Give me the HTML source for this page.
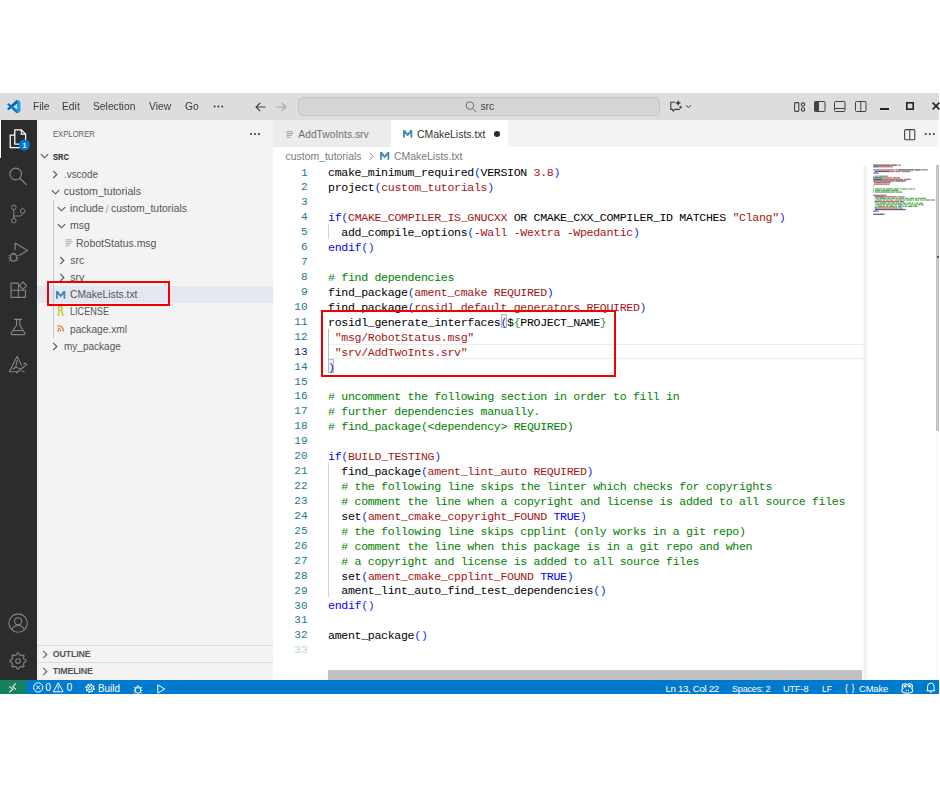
<!DOCTYPE html>
<html><head><meta charset="utf-8"><style>
html,body{margin:0;padding:0;background:#fff;width:940px;height:788px;overflow:hidden;}
.t{position:absolute;white-space:pre;line-height:1;}
.g{will-change:transform;}
.r{position:absolute;}
svg.r{overflow:visible;}
</style></head><body>
<div class="r" style="left:0px;top:93px;width:938.8px;height:26.599999999999994px;background:#dddddd;"></div>
<div class="r" style="left:0px;top:119.6px;width:37px;height:560.0px;background:#2c2c2c;"></div>
<div class="r" style="left:37px;top:119.6px;width:235.5px;height:560.0px;background:#f3f3f3;"></div>
<div class="r" style="left:272.5px;top:119.6px;width:666.3px;height:560.0px;background:#ffffff;"></div>
<div class="r" style="left:0px;top:679.6px;width:938.8px;height:14.199999999999932px;background:#007acc;"></div>
<div class="r" style="left:0px;top:679.6px;width:26px;height:14.199999999999932px;background:#16825d;"></div>
<svg class="r" style="left:6.8px;top:100px;width:13.6px;height:13.2px" viewBox="0 0 100 100"><path d="M96.46 10.8L75.86.87C73.48-.28 70.62.2 68.75 2.07L1.3 63.58c-1.81 1.65-1.81 4.5 0 6.15l5.51 5.01c1.49 1.35 3.72 1.45 5.32.24L93.36 13.37c2.72-2.07 6.64-.13 6.64 3.3v-.24c0-2.41-1.38-4.6-3.54-5.64z" fill="#0065a9"/>
<path d="M96.46 89.2l-20.6 9.92c-2.38 1.15-5.24.66-7.11-1.2L1.3 36.42c-1.81-1.65-1.81-4.5 0-6.15l5.51-5.01c1.49-1.35 3.72-1.45 5.32-.24l81.23 61.62c2.72 2.07 6.64.13 6.64-3.3v.24c0 2.41-1.38 4.6-3.54 5.64z" fill="#007acc"/>
<path d="M75.86 99.13c-2.38 1.15-5.24.66-7.11-1.2 2.3 2.3 6.24.67 6.24-2.58V4.65c0-3.25-3.94-4.88-6.24-2.58 1.87-1.87 4.73-2.35 7.11-1.2l20.6 9.91A6.25 6.25 0 0 1 100 16.4v67.2a6.25 6.25 0 0 1-3.54 5.63z" fill="#1f9cf0"/></svg>
<div class="t g" style="left:33.00px;top:102.38px;font-size:10.3px;color:#3a3a3a;font-weight:normal;font-family:'Liberation Sans', sans-serif;">File</div>
<div class="t g" style="left:62.00px;top:102.38px;font-size:10.3px;color:#3a3a3a;font-weight:normal;font-family:'Liberation Sans', sans-serif;">Edit</div>
<div class="t g" style="left:93.30px;top:102.38px;font-size:10.3px;color:#3a3a3a;font-weight:normal;font-family:'Liberation Sans', sans-serif;">Selection</div>
<div class="t g" style="left:149.00px;top:102.38px;font-size:10.3px;color:#3a3a3a;font-weight:normal;font-family:'Liberation Sans', sans-serif;">View</div>
<div class="t g" style="left:184.50px;top:102.38px;font-size:10.3px;color:#3a3a3a;font-weight:normal;font-family:'Liberation Sans', sans-serif;">Go</div>
<svg class="r" style="left:210px;top:103px;width:16px;height:7px" viewBox="0 0 16 7"><circle cx="4.60" cy="3.5" r="0.95" fill="#333"/><circle cx="8.45" cy="3.5" r="0.95" fill="#333"/><circle cx="12.30" cy="3.5" r="0.95" fill="#333"/></svg>
<svg class="r" style="left:255px;top:102px;width:11px;height:10px" viewBox="0 0 11 10"><path d="M10.5 5 H1.2 M5.2 1 L1 5 L5.2 9" stroke="#444" stroke-width="1.1" fill="none"/></svg>
<svg class="r" style="left:276px;top:102px;width:11px;height:10px" viewBox="0 0 11 10"><path d="M0.5 5 H9.8 M5.8 1 L10 5 L5.8 9" stroke="#a8a8a8" stroke-width="1.1" fill="none"/></svg>
<div class="r" style="left:297.5px;top:96.8px;width:362px;height:18.8px;background:#d5d5d5;box-sizing:border-box;border:1px solid #c5c5c5;border-radius:5px;"></div>
<svg class="r" style="left:465px;top:100.5px;width:12px;height:12px" viewBox="0 0 12 12"><circle cx="4.9" cy="4.6" r="3.8" stroke="#666" stroke-width="0.95" fill="none"/><path d="M7.6 7.4 L11.2 11" stroke="#666" stroke-width="1"/></svg>
<div class="t " style="left:480.40px;top:102.18px;font-size:10.3px;color:#444444;font-weight:normal;font-family:'Liberation Sans', sans-serif;">src</div>
<svg class="r" style="left:669px;top:100px;width:24px;height:12px" viewBox="0 0 24 12"><path d="M6.2 2.3 H1.8 V9.4 H3.4 L4.3 11 L5.9 9.4 H10.8" stroke="#3b3b3b" stroke-width="1.1" fill="none"/>
<path d="M9.2 0.1 L10.1 2.1 L12.1 3.0 L10.1 3.9 L9.2 5.9 L8.3 3.9 L6.3 3.0 L8.3 2.1 Z" fill="#3b3b3b"/>
<path d="M11.6 5.4 L12.2 6.6 L13.4 7.2 L12.2 7.8 L11.6 9.0 L11.0 7.8 L9.8 7.2 L11.0 6.6 Z" fill="#3b3b3b"/>
<path d="M17.2 5.4 L19.5 7.5 L21.8 5.4" stroke="#3b3b3b" stroke-width="1" fill="none"/></svg>
<svg class="r" style="left:794px;top:102px;width:12px;height:10px" viewBox="0 0 12 10"><rect x="0.6" y="0.6" width="4.2" height="8.8" rx="0.8" stroke="#444" stroke-width="1.1" fill="none"/><circle cx="9" cy="2.6" r="1.7" stroke="#444" stroke-width="1.1" fill="none"/><circle cx="9" cy="7.4" r="1.7" stroke="#444" stroke-width="1.1" fill="none"/></svg>
<svg class="r" style="left:814px;top:101px;width:12px;height:11px" viewBox="0 0 12 11"><rect x="0.5" y="0.5" width="10.5" height="10" rx="1" stroke="#444" stroke-width="1" fill="none"/><rect x="0.5" y="0.5" width="4.5" height="10" fill="#444"/></svg>
<svg class="r" style="left:834px;top:101px;width:12px;height:11px" viewBox="0 0 12 11"><rect x="0.5" y="0.5" width="10.5" height="10" rx="1" stroke="#444" stroke-width="1" fill="none"/><path d="M0.5 7.5 H11" stroke="#444" stroke-width="1"/></svg>
<svg class="r" style="left:855px;top:101px;width:12px;height:11px" viewBox="0 0 12 11"><rect x="0.5" y="0.5" width="10.5" height="10" rx="1" stroke="#444" stroke-width="1" fill="none"/><path d="M5.75 0.5 V10.5" stroke="#444" stroke-width="1"/></svg>
<div class="r" style="left:880.4px;top:108px;width:8.6px;height:1.7px;background:#222;"></div>
<svg class="r" style="left:906px;top:102.4px;width:8px;height:8px" viewBox="0 0 8 8"><rect x="0.8" y="0.8" width="6.4" height="6.4" stroke="#222" stroke-width="1.6" fill="none"/></svg>
<svg class="r" style="left:931.5px;top:102.3px;width:8px;height:8px" viewBox="0 0 8 8"><path d="M0.6 0.6 L7.4 7.4 M7.4 0.6 L0.6 7.4" stroke="#222" stroke-width="1.5"/></svg>
<div class="r" style="left:0px;top:119.6px;width:1.2px;height:38px;background:#ffffff;"></div>
<svg class="r" style="left:8px;top:128px;width:22px;height:22px" viewBox="0 0 22 22"><path d="M6.8 1.8 H13.3 L17.6 6.1 V16 H6.8 Z" stroke="#fff" stroke-width="1.25" fill="none" stroke-linejoin="round"/>
<path d="M13.3 1.8 V6.1 H17.6" stroke="#fff" stroke-width="1.1" fill="none"/>
<path d="M6.8 7 H2.2 V19.6 H11.8 V16" stroke="#fff" stroke-width="1.25" fill="none" stroke-linejoin="round"/>
<circle cx="16.4" cy="17" r="5.5" fill="#0078d4"/><text x="16.4" y="19.6" font-size="7" font-family="Liberation Sans" font-weight="bold" fill="#fff" text-anchor="middle">1</text></svg>
<svg class="r" style="left:8px;top:166px;width:22px;height:22px" viewBox="0 0 22 22"><circle cx="7.7" cy="8" r="5.8" stroke="#858585" stroke-width="1.2" fill="none"/><path d="M11.9 12.2 L18.6 18.9" stroke="#858585" stroke-width="1.3"/></svg>
<svg class="r" style="left:9px;top:203px;width:20px;height:21px" viewBox="0 0 20 21"><circle cx="4.8" cy="4.4" r="2.3" stroke="#858585" stroke-width="1" fill="none"/>
<circle cx="13.6" cy="8" r="2.3" stroke="#858585" stroke-width="1" fill="none"/>
<circle cx="4.8" cy="17.7" r="2.3" stroke="#858585" stroke-width="1" fill="none"/>
<path d="M4.8 6.7 V15.4 M13.6 10.3 Q13.6 13 11 13 H6.5 Q4.8 13 4.8 14.5" stroke="#858585" stroke-width="1" fill="none"/></svg>
<svg class="r" style="left:7px;top:242px;width:22px;height:21px" viewBox="0 0 22 21"><path d="M8.1 1 V8.3 M8.1 1 L20.5 8.5 L12.2 13.6" stroke="#858585" stroke-width="1.15" fill="none"/>
<ellipse cx="6.5" cy="15.6" rx="3.1" ry="3.7" stroke="#858585" stroke-width="1.1" fill="none"/>
<path d="M4.6 12.4 Q6.5 9.6 8.4 12.4" stroke="#858585" stroke-width="1.1" fill="none"/>
<path d="M3.4 13.6 H1.6 M3.3 16 H1.3 M3.5 18.3 H1.8 M9.6 13.6 H11.4 M9.7 16 H11.7 M9.5 18.3 H11.2" stroke="#858585" stroke-width="1" fill="none"/></svg>
<svg class="r" style="left:9px;top:281px;width:20px;height:19px" viewBox="0 0 20 19"><path d="M2.05 2.15 H9.4 V16.35 H2.05 Z M2.05 9.2 H16.45 V16.35 H9.4" stroke="#858585" stroke-width="1.1" fill="none" stroke-linejoin="round"/>
<path d="M14 1.0 L17.6 4.65 L14 8.3 L10.4 4.65 Z" stroke="#858585" stroke-width="1.1" fill="none" stroke-linejoin="round"/></svg>
<svg class="r" style="left:9px;top:318px;width:20px;height:19px" viewBox="0 0 20 19"><path d="M5.2 1.4 H13 M7.6 1.4 V7.2 L2.3 15 Q1.7 16.6 3.5 16.6 H14.5 Q16.3 16.6 15.7 15 L10.8 7.2 V1.4" stroke="#858585" stroke-width="1.15" fill="none" stroke-linejoin="round"/>
<path d="M4.3 12.6 H13.7" stroke="#858585" stroke-width="1.1"/></svg>
<svg class="r" style="left:8px;top:355px;width:20px;height:20px" viewBox="0 0 20 20"><path d="M9.2 1.3 L1.3 16.8 H9 M9.2 1.3 L13.6 10.5 M9.2 5 L7.8 12.2 Q6 13.5 4.4 14.2 M7.8 12.2 Q11 13 12.5 14" stroke="#858585" stroke-width="1.1" fill="none" stroke-linejoin="round"/>
<path d="M8.3 18.2 L17.2 10.4 M15.4 8.6 Q18.6 7.6 18.8 10.6 M14 16 L16.5 16.8" stroke="#858585" stroke-width="1.3" fill="none"/></svg>
<svg class="r" style="left:8px;top:612.5px;width:21px;height:21px" viewBox="0 0 21 21"><circle cx="10.1" cy="10.1" r="9.2" stroke="#858585" stroke-width="1.1" fill="none"/>
<circle cx="10.1" cy="8.3" r="3.6" stroke="#858585" stroke-width="1.1" fill="none"/>
<path d="M3.9 16.6 Q5.5 12.5 10.1 12.5 Q14.7 12.5 16.3 16.6" stroke="#858585" stroke-width="1.1" fill="none"/></svg>
<svg class="r" style="left:8px;top:650.8px;width:20px;height:20px" viewBox="0 0 20 20"><path d="M16.15 8.63 L17.94 9.04 L17.94 10.96 L16.15 11.37 L15.32 13.38 L16.29 14.94 L14.94 16.29 L13.38 15.32 L11.37 16.15 L10.96 17.94 L9.04 17.94 L8.63 16.15 L6.62 15.32 L5.06 16.29 L3.71 14.94 L4.68 13.38 L3.85 11.37 L2.06 10.96 L2.06 9.04 L3.85 8.63 L4.68 6.62 L3.71 5.06 L5.06 3.71 L6.62 4.68 L8.63 3.85 L9.04 2.06 L10.96 2.06 L11.37 3.85 L13.38 4.68 L14.94 3.71 L16.29 5.06 L15.32 6.62 Z" stroke="#858585" stroke-width="1.1" fill="none" stroke-linejoin="round"/><circle cx="10" cy="10" r="2.3" stroke="#858585" stroke-width="1.1" fill="none"/></svg>
<div class="t " style="left:52.60px;top:128.97px;font-size:9.6px;color:#616161;font-weight:normal;font-family:'Liberation Sans', sans-serif;transform:scaleX(0.8);transform-origin:0 0;">EXPLORER</div>
<svg class="r" style="left:246px;top:130px;width:16px;height:8px" viewBox="0 0 16 8"><circle cx="5.00" cy="4.1" r="1.05" fill="#424242"/><circle cx="9.00" cy="4.1" r="1.05" fill="#424242"/><circle cx="13.00" cy="4.1" r="1.05" fill="#424242"/></svg>
<svg class="r" style="left:40.3px;top:153.1px;width:9px;height:6px" viewBox="0 0 9 6"><path d="M0.8 1.2 L4.5 4.8 L8.2 1.2" stroke="#555555" stroke-width="1.15" fill="none"/></svg>
<div class="t " style="left:52.60px;top:151.77px;font-size:9.6px;color:#333333;font-weight:bold;font-family:'Liberation Sans', sans-serif;transform:scaleX(0.78);transform-origin:0 0;-webkit-text-stroke:0.15px #333;">SRC</div>
<div class="r" style="left:37px;top:286.2px;width:235.5px;height:17.2px;background:#e4e6f1;"></div>
<svg class="r" style="left:52px;top:169.79999999999998px;width:6px;height:9px" viewBox="0 0 6 9"><path d="M1.2 0.8 L4.8 4.5 L1.2 8.2" stroke="#555555" stroke-width="1.15" fill="none"/></svg>
<div class="t " style="left:63.80px;top:168.83px;font-size:10.6px;color:#555555;font-weight:normal;font-family:'Liberation Sans', sans-serif;transform:scaleX(0.93);transform-origin:0 0;">.vscode</div>
<svg class="r" style="left:50.7px;top:188.7px;width:9px;height:6px" viewBox="0 0 9 6"><path d="M0.8 1.2 L4.5 4.8 L8.2 1.2" stroke="#555555" stroke-width="1.15" fill="none"/></svg>
<div class="t " style="left:63.80px;top:186.03px;font-size:10.6px;color:#555555;font-weight:normal;font-family:'Liberation Sans', sans-serif;">custom_tutorials</div>
<svg class="r" style="left:56.9px;top:205.89999999999998px;width:9px;height:6px" viewBox="0 0 9 6"><path d="M0.8 1.2 L4.5 4.8 L8.2 1.2" stroke="#555555" stroke-width="1.15" fill="none"/></svg>
<div class="t " style="left:70.00px;top:203.23px;font-size:10.6px;color:#555555;font-weight:normal;font-family:'Liberation Sans', sans-serif;">include</div>
<div class="t " style="left:105.40px;top:204.07px;font-size:11.5px;color:#a8a8a8;font-weight:normal;font-family:'Liberation Sans', sans-serif;">/</div>
<div class="t " style="left:111.00px;top:203.23px;font-size:10.6px;color:#555555;font-weight:normal;font-family:'Liberation Sans', sans-serif;transform:scaleX(0.985);transform-origin:0 0;">custom_tutorials</div>
<svg class="r" style="left:56.9px;top:223.09999999999997px;width:9px;height:6px" viewBox="0 0 9 6"><path d="M0.8 1.2 L4.5 4.8 L8.2 1.2" stroke="#555555" stroke-width="1.15" fill="none"/></svg>
<div class="t " style="left:70.00px;top:220.43px;font-size:10.6px;color:#555555;font-weight:normal;font-family:'Liberation Sans', sans-serif;">msg</div>
<svg class="r" style="left:64.5px;top:238.6px;width:8px;height:8px" viewBox="0 0 8 8"><path d="M0.5 0.8 H6.5 M0.5 2.8 H7.5 M0.5 4.8 H6 M0.5 6.8 H4.5" stroke="#a0a0a0" stroke-width="0.9"/></svg>
<div class="t " style="left:76.40px;top:237.63px;font-size:10.6px;color:#555555;font-weight:normal;font-family:'Liberation Sans', sans-serif;transform:scaleX(0.99);transform-origin:0 0;">RobotStatus.msg</div>
<svg class="r" style="left:58.6px;top:255.79999999999995px;width:6px;height:9px" viewBox="0 0 6 9"><path d="M1.2 0.8 L4.8 4.5 L1.2 8.2" stroke="#555555" stroke-width="1.15" fill="none"/></svg>
<div class="t " style="left:70.30px;top:254.83px;font-size:10.6px;color:#555555;font-weight:normal;font-family:'Liberation Sans', sans-serif;">src</div>
<svg class="r" style="left:58.6px;top:273.0px;width:6px;height:9px" viewBox="0 0 6 9"><path d="M1.2 0.8 L4.8 4.5 L1.2 8.2" stroke="#555555" stroke-width="1.15" fill="none"/></svg>
<div class="t " style="left:70.30px;top:272.03px;font-size:10.6px;color:#555555;font-weight:normal;font-family:'Liberation Sans', sans-serif;">srv</div>
<svg class="r" style="left:56px;top:290.59999999999997px;width:10px;height:8px" viewBox="0 0 10 8"><path d="M0 7.8 V0 H1.9 L4.65 3.4 L7.4 0 H9.3 V7.8 H7.5 V3.2 L4.65 6.2 L1.8 3.2 V7.8 Z" fill="#3c8cb4"/></svg>
<div class="t " style="left:70.30px;top:289.23px;font-size:10.6px;color:#555555;font-weight:normal;font-family:'Liberation Sans', sans-serif;transform:scaleX(0.97);transform-origin:0 0;">CMakeLists.txt</div>
<svg class="r" style="left:56.5px;top:306.2px;width:8px;height:11px" viewBox="0 0 8 11"><circle cx="3.2" cy="2.5" r="2" stroke="#cbcb41" stroke-width="1.3" fill="#e8e8a0"/><path d="M2 4.2 L1.2 10 M4.4 4.2 L6.2 10" stroke="#cbcb41" stroke-width="1.5"/></svg>
<div class="t " style="left:70.30px;top:306.43px;font-size:10.6px;color:#555555;font-weight:normal;font-family:'Liberation Sans', sans-serif;transform:scaleX(0.86);transform-origin:0 0;">LICENSE</div>
<svg class="r" style="left:56.8px;top:325.3px;width:7px;height:7px" viewBox="0 0 7 7"><circle cx="1.2" cy="5.7" r="1" fill="#e37933"/><path d="M0.4 3 Q3.5 3 3.7 6.4 M0.4 0.6 Q6.2 0.6 6.4 6.4" stroke="#e37933" stroke-width="1.2" fill="none"/></svg>
<div class="t " style="left:70.30px;top:323.63px;font-size:10.6px;color:#555555;font-weight:normal;font-family:'Liberation Sans', sans-serif;transform:scaleX(0.957);transform-origin:0 0;">package.xml</div>
<svg class="r" style="left:52.2px;top:341.79999999999995px;width:6px;height:9px" viewBox="0 0 6 9"><path d="M1.2 0.8 L4.8 4.5 L1.2 8.2" stroke="#555555" stroke-width="1.15" fill="none"/></svg>
<div class="t " style="left:63.80px;top:340.83px;font-size:10.6px;color:#555555;font-weight:normal;font-family:'Liberation Sans', sans-serif;transform:scaleX(0.945);transform-origin:0 0;">my_package</div>
<div class="r" style="left:52.6px;top:199.5px;width:1px;height:138px;background:#c8c8c8;"></div>
<div class="r" style="left:46.9px;top:280.8px;width:123.1px;height:25px;box-sizing:border-box;border:2.2px solid #f00000;"></div>
<div class="r" style="left:37px;top:645px;width:235.5px;height:0.9px;background:#dcdcdc;"></div>
<div class="r" style="left:37px;top:662px;width:235.5px;height:0.9px;background:#dcdcdc;"></div>
<svg class="r" style="left:42.2px;top:649.7px;width:6px;height:9px" viewBox="0 0 6 9"><path d="M1.2 0.8 L4.8 4.5 L1.2 8.2" stroke="#6a6a6a" stroke-width="1.15" fill="none"/></svg>
<div class="t " style="left:52.80px;top:650.27px;font-size:8.9px;color:#555555;font-weight:bold;font-family:'Liberation Sans', sans-serif;letter-spacing:-0.2px;">OUTLINE</div>
<svg class="r" style="left:42.2px;top:666.7px;width:6px;height:9px" viewBox="0 0 6 9"><path d="M1.2 0.8 L4.8 4.5 L1.2 8.2" stroke="#6a6a6a" stroke-width="1.15" fill="none"/></svg>
<div class="t " style="left:52.80px;top:667.27px;font-size:8.9px;color:#555555;font-weight:bold;font-family:'Liberation Sans', sans-serif;letter-spacing:-0.2px;">TIMELINE</div>
<div class="r" style="left:272.5px;top:119.6px;width:666.3px;height:27.1px;background:#f3f3f3;"></div>
<div class="r" style="left:272.5px;top:119.6px;width:118.2px;height:27.1px;background:#ececec;"></div>
<div class="r" style="left:390.7px;top:119.6px;width:117.3px;height:27.5px;background:#ffffff;"></div>
<svg class="r" style="left:286px;top:130.5px;width:8px;height:7px" viewBox="0 0 8 7"><path d="M0.5 0.6 H7 M0.5 2.5 H7.5 M0.5 4.4 H6 M0.5 6.3 H4.5" stroke="#9a9a9a" stroke-width="0.9"/></svg>
<div class="t " style="left:298.30px;top:129.68px;font-size:10.3px;color:#707070;font-weight:normal;font-family:'Liberation Sans', sans-serif;">AddTwoInts.srv</div>
<svg class="r" style="left:403px;top:130.3px;width:10px;height:8px" viewBox="0 0 10 8"><path d="M0 7.8 V0 H1.9 L4.65 3.4 L7.4 0 H9.3 V7.8 H7.5 V3.2 L4.65 6.2 L1.8 3.2 V7.8 Z" fill="#3c8cb4"/></svg>
<div class="t " style="left:417.00px;top:129.55px;font-size:10.45px;color:#333333;font-weight:normal;font-family:'Liberation Sans', sans-serif;">CMakeLists.txt</div>
<div class="r" style="left:493.6px;top:130.9px;width:6.4px;height:6.4px;border-radius:50%;background:#2b2b2b;"></div>
<svg class="r" style="left:904px;top:128.8px;width:11.5px;height:11.5px" viewBox="0 0 11.5 11.5"><rect x="0.6" y="0.6" width="10.2" height="10.2" rx="1.3" stroke="#424242" stroke-width="1.1" fill="none"/><path d="M5.7 0.6 V10.8" stroke="#424242" stroke-width="1.1"/></svg>
<svg class="r" style="left:922px;top:130px;width:16px;height:8px" viewBox="0 0 16 8"><circle cx="3.80" cy="4.1" r="1.05" fill="#424242"/><circle cx="7.80" cy="4.1" r="1.05" fill="#424242"/><circle cx="11.80" cy="4.1" r="1.05" fill="#424242"/></svg>
<div class="t " style="left:285.50px;top:151.95px;font-size:10.45px;color:#7a7a7a;font-weight:normal;font-family:'Liberation Sans', sans-serif;">custom_tutorials</div>
<svg class="r" style="left:368.8px;top:152.2px;width:5px;height:9px" viewBox="0 0 5 9"><path d="M0.8 0.8 L4.2 4.3 L0.8 7.8" stroke="#8a8a8a" stroke-width="1" fill="none"/></svg>
<svg class="r" style="left:379.6px;top:152.1px;width:10px;height:8px" viewBox="0 0 10 8"><path d="M0 7.8 V0 H1.9 L4.65 3.4 L7.4 0 H9.3 V7.8 H7.5 V3.2 L4.65 6.2 L1.8 3.2 V7.8 Z" fill="#3c8cb4"/></svg>
<div class="t " style="left:394.00px;top:151.95px;font-size:10.45px;color:#7a7a7a;font-weight:normal;font-family:'Liberation Sans', sans-serif;">CMakeLists.txt</div>
<div class="r" style="left:328px;top:344px;width:537.2px;height:14.6px;box-sizing:border-box;border-top:1px solid #ececec;border-bottom:1px solid #ececec;"></div>
<div class="r" style="left:328.0px;top:223.82px;width:1.0px;height:14.93px;background:#d3d3d3;"></div>
<div class="r" style="left:328.0px;top:328.83000000000004px;width:1.1px;height:29.86px;background:#bdbdbd;"></div>
<div class="r" style="left:328.0px;top:462.70000000000005px;width:1.0px;height:134.37px;background:#d3d3d3;"></div>
<div class="r" style="left:500.78px;top:314.00px;width:6.03px;height:13.73px;box-sizing:border-box;border:1px solid #b9b9b9;background:#f0f0f0;"></div>
<div class="r" style="left:328.40px;top:358.79px;width:6.03px;height:13.73px;box-sizing:border-box;border:1px solid #b9b9b9;background:#f0f0f0;"></div>
<div class="t " style="left:300.97px;top:167.53px;font-size:11.05px;color:#237893;font-weight:normal;font-family:'Liberation Mono', monospace;">1</div>
<div class="t" style="left:328.1px;top:167.41px;font-size:11.6px;letter-spacing:-0.330px;font-family:'Liberation Mono', monospace;"><span style="color:#000000">cmake_minimum_required</span><span style="color:#0431fa">(</span><span style="color:#000000">VERSION </span><span style="color:#a31515">3.8</span><span style="color:#0431fa">)</span></div>
<div class="t " style="left:300.97px;top:182.46px;font-size:11.05px;color:#237893;font-weight:normal;font-family:'Liberation Mono', monospace;">2</div>
<div class="t" style="left:328.1px;top:182.34px;font-size:11.6px;letter-spacing:-0.330px;font-family:'Liberation Mono', monospace;"><span style="color:#000000">project</span><span style="color:#0431fa">(</span><span style="color:#a31515">custom_tutorials</span><span style="color:#0431fa">)</span></div>
<div class="t " style="left:300.97px;top:197.39px;font-size:11.05px;color:#237893;font-weight:normal;font-family:'Liberation Mono', monospace;">3</div>
<div class="t " style="left:300.97px;top:212.32px;font-size:11.05px;color:#237893;font-weight:normal;font-family:'Liberation Mono', monospace;">4</div>
<div class="t" style="left:328.1px;top:212.20px;font-size:11.6px;letter-spacing:-0.330px;font-family:'Liberation Mono', monospace;"><span style="color:#0000ff">if</span><span style="color:#0431fa">(</span><span style="color:#a31515">CMAKE_COMPILER_IS_GNUCXX</span><span style="color:#000000"> OR CMAKE_CXX_COMPILER_ID MATCHES </span><span style="color:#a31515">&quot;Clang&quot;</span><span style="color:#0431fa">)</span></div>
<div class="t " style="left:300.97px;top:227.25px;font-size:11.05px;color:#237893;font-weight:normal;font-family:'Liberation Mono', monospace;">5</div>
<div class="t" style="left:328.1px;top:227.13px;font-size:11.6px;letter-spacing:-0.330px;font-family:'Liberation Mono', monospace;"><span style="color:#000000">  add_compile_options</span><span style="color:#0431fa">(</span><span style="color:#a31515">-Wall -Wextra -Wpedantic</span><span style="color:#0431fa">)</span></div>
<div class="t " style="left:300.97px;top:242.18px;font-size:11.05px;color:#237893;font-weight:normal;font-family:'Liberation Mono', monospace;">6</div>
<div class="t" style="left:328.1px;top:242.06px;font-size:11.6px;letter-spacing:-0.330px;font-family:'Liberation Mono', monospace;"><span style="color:#0000ff">endif</span><span style="color:#0431fa">()</span></div>
<div class="t " style="left:300.97px;top:257.11px;font-size:11.05px;color:#237893;font-weight:normal;font-family:'Liberation Mono', monospace;">7</div>
<div class="t " style="left:300.97px;top:272.04px;font-size:11.05px;color:#237893;font-weight:normal;font-family:'Liberation Mono', monospace;">8</div>
<div class="t" style="left:328.1px;top:271.92px;font-size:11.6px;letter-spacing:-0.330px;font-family:'Liberation Mono', monospace;"><span style="color:#008000"># find dependencies</span></div>
<div class="t " style="left:300.97px;top:286.97px;font-size:11.05px;color:#237893;font-weight:normal;font-family:'Liberation Mono', monospace;">9</div>
<div class="t" style="left:328.1px;top:286.85px;font-size:11.6px;letter-spacing:-0.330px;font-family:'Liberation Mono', monospace;"><span style="color:#000000">find_package</span><span style="color:#0431fa">(</span><span style="color:#a31515">ament_cmake REQUIRED</span><span style="color:#0431fa">)</span></div>
<div class="t " style="left:294.34px;top:301.90px;font-size:11.05px;color:#237893;font-weight:normal;font-family:'Liberation Mono', monospace;">10</div>
<div class="t" style="left:328.1px;top:301.78px;font-size:11.6px;letter-spacing:-0.330px;font-family:'Liberation Mono', monospace;"><span style="color:#000000">find_package</span><span style="color:#0431fa">(</span><span style="color:#a31515">rosidl_default_generators REQUIRED</span><span style="color:#0431fa">)</span></div>
<div class="t " style="left:294.34px;top:316.83px;font-size:11.05px;color:#237893;font-weight:normal;font-family:'Liberation Mono', monospace;">11</div>
<div class="t" style="left:328.1px;top:316.71px;font-size:11.6px;letter-spacing:-0.330px;font-family:'Liberation Mono', monospace;"><span style="color:#000000">rosidl_generate_interfaces</span><span style="color:#0431fa">(</span><span style="color:#000000">$</span><span style="color:#319331">{</span><span style="color:#000000">PROJECT_NAME</span><span style="color:#319331">}</span></div>
<div class="t " style="left:294.34px;top:331.76px;font-size:11.05px;color:#237893;font-weight:normal;font-family:'Liberation Mono', monospace;">12</div>
<div class="t" style="left:328.1px;top:331.64px;font-size:11.6px;letter-spacing:-0.330px;font-family:'Liberation Mono', monospace;"><span style="color:#a31515"> &quot;msg/RobotStatus.msg&quot;</span></div>
<div class="t " style="left:294.34px;top:346.69px;font-size:11.05px;color:#0b216f;font-weight:normal;font-family:'Liberation Mono', monospace;">13</div>
<div class="t" style="left:328.1px;top:346.57px;font-size:11.6px;letter-spacing:-0.330px;font-family:'Liberation Mono', monospace;"><span style="color:#a31515"> &quot;srv/AddTwoInts.srv&quot;</span></div>
<div class="t " style="left:294.34px;top:361.62px;font-size:11.05px;color:#237893;font-weight:normal;font-family:'Liberation Mono', monospace;">14</div>
<div class="t" style="left:328.1px;top:361.50px;font-size:11.6px;letter-spacing:-0.330px;font-family:'Liberation Mono', monospace;"><span style="color:#0431fa">)</span></div>
<div class="t " style="left:294.34px;top:376.55px;font-size:11.05px;color:#237893;font-weight:normal;font-family:'Liberation Mono', monospace;">15</div>
<div class="t " style="left:294.34px;top:391.48px;font-size:11.05px;color:#237893;font-weight:normal;font-family:'Liberation Mono', monospace;">16</div>
<div class="t" style="left:328.1px;top:391.36px;font-size:11.6px;letter-spacing:-0.330px;font-family:'Liberation Mono', monospace;"><span style="color:#008000"># uncomment the following section in order to fill in</span></div>
<div class="t " style="left:294.34px;top:406.41px;font-size:11.05px;color:#237893;font-weight:normal;font-family:'Liberation Mono', monospace;">17</div>
<div class="t" style="left:328.1px;top:406.29px;font-size:11.6px;letter-spacing:-0.330px;font-family:'Liberation Mono', monospace;"><span style="color:#008000"># further dependencies manually.</span></div>
<div class="t " style="left:294.34px;top:421.34px;font-size:11.05px;color:#237893;font-weight:normal;font-family:'Liberation Mono', monospace;">18</div>
<div class="t" style="left:328.1px;top:421.22px;font-size:11.6px;letter-spacing:-0.330px;font-family:'Liberation Mono', monospace;"><span style="color:#008000"># find_package(&lt;dependency&gt; REQUIRED)</span></div>
<div class="t " style="left:294.34px;top:436.27px;font-size:11.05px;color:#237893;font-weight:normal;font-family:'Liberation Mono', monospace;">19</div>
<div class="t " style="left:294.34px;top:451.20px;font-size:11.05px;color:#237893;font-weight:normal;font-family:'Liberation Mono', monospace;">20</div>
<div class="t" style="left:328.1px;top:451.08px;font-size:11.6px;letter-spacing:-0.330px;font-family:'Liberation Mono', monospace;"><span style="color:#0000ff">if</span><span style="color:#0431fa">(</span><span style="color:#a31515">BUILD_TESTING</span><span style="color:#0431fa">)</span></div>
<div class="t " style="left:294.34px;top:466.13px;font-size:11.05px;color:#237893;font-weight:normal;font-family:'Liberation Mono', monospace;">21</div>
<div class="t" style="left:328.1px;top:466.01px;font-size:11.6px;letter-spacing:-0.330px;font-family:'Liberation Mono', monospace;"><span style="color:#000000">  find_package</span><span style="color:#0431fa">(</span><span style="color:#a31515">ament_lint_auto REQUIRED</span><span style="color:#0431fa">)</span></div>
<div class="t " style="left:294.34px;top:481.06px;font-size:11.05px;color:#237893;font-weight:normal;font-family:'Liberation Mono', monospace;">22</div>
<div class="t" style="left:328.1px;top:480.94px;font-size:11.6px;letter-spacing:-0.330px;font-family:'Liberation Mono', monospace;"><span style="color:#008000">  # the following line skips the linter which checks for copyrights</span></div>
<div class="t " style="left:294.34px;top:495.99px;font-size:11.05px;color:#237893;font-weight:normal;font-family:'Liberation Mono', monospace;">23</div>
<div class="t" style="left:328.1px;top:495.87px;font-size:11.6px;letter-spacing:-0.330px;font-family:'Liberation Mono', monospace;"><span style="color:#008000">  # comment the line when a copyright and license is added to all source files</span></div>
<div class="t " style="left:294.34px;top:510.92px;font-size:11.05px;color:#237893;font-weight:normal;font-family:'Liberation Mono', monospace;">24</div>
<div class="t" style="left:328.1px;top:510.80px;font-size:11.6px;letter-spacing:-0.330px;font-family:'Liberation Mono', monospace;"><span style="color:#000000">  set</span><span style="color:#0431fa">(</span><span style="color:#a31515">ament_cmake_copyright_FOUND </span><span style="color:#0000ff">TRUE</span><span style="color:#0431fa">)</span></div>
<div class="t " style="left:294.34px;top:525.85px;font-size:11.05px;color:#237893;font-weight:normal;font-family:'Liberation Mono', monospace;">25</div>
<div class="t" style="left:328.1px;top:525.73px;font-size:11.6px;letter-spacing:-0.330px;font-family:'Liberation Mono', monospace;"><span style="color:#008000">  # the following line skips cpplint (only works in a git repo)</span></div>
<div class="t " style="left:294.34px;top:540.78px;font-size:11.05px;color:#237893;font-weight:normal;font-family:'Liberation Mono', monospace;">26</div>
<div class="t" style="left:328.1px;top:540.66px;font-size:11.6px;letter-spacing:-0.330px;font-family:'Liberation Mono', monospace;"><span style="color:#008000">  # comment the line when this package is in a git repo and when</span></div>
<div class="t " style="left:294.34px;top:555.71px;font-size:11.05px;color:#237893;font-weight:normal;font-family:'Liberation Mono', monospace;">27</div>
<div class="t" style="left:328.1px;top:555.59px;font-size:11.6px;letter-spacing:-0.330px;font-family:'Liberation Mono', monospace;"><span style="color:#008000">  # a copyright and license is added to all source files</span></div>
<div class="t " style="left:294.34px;top:570.64px;font-size:11.05px;color:#237893;font-weight:normal;font-family:'Liberation Mono', monospace;">28</div>
<div class="t" style="left:328.1px;top:570.52px;font-size:11.6px;letter-spacing:-0.330px;font-family:'Liberation Mono', monospace;"><span style="color:#000000">  set</span><span style="color:#0431fa">(</span><span style="color:#a31515">ament_cmake_cpplint_FOUND </span><span style="color:#0000ff">TRUE</span><span style="color:#0431fa">)</span></div>
<div class="t " style="left:294.34px;top:585.57px;font-size:11.05px;color:#237893;font-weight:normal;font-family:'Liberation Mono', monospace;">29</div>
<div class="t" style="left:328.1px;top:585.45px;font-size:11.6px;letter-spacing:-0.330px;font-family:'Liberation Mono', monospace;"><span style="color:#000000">  ament_lint_auto_find_test_dependencies</span><span style="color:#0431fa">()</span></div>
<div class="t " style="left:294.34px;top:600.50px;font-size:11.05px;color:#237893;font-weight:normal;font-family:'Liberation Mono', monospace;">30</div>
<div class="t" style="left:328.1px;top:600.38px;font-size:11.6px;letter-spacing:-0.330px;font-family:'Liberation Mono', monospace;"><span style="color:#0000ff">endif</span><span style="color:#0431fa">()</span></div>
<div class="t " style="left:294.34px;top:615.43px;font-size:11.05px;color:#237893;font-weight:normal;font-family:'Liberation Mono', monospace;">31</div>
<div class="t " style="left:294.34px;top:630.36px;font-size:11.05px;color:#237893;font-weight:normal;font-family:'Liberation Mono', monospace;">32</div>
<div class="t" style="left:328.1px;top:630.24px;font-size:11.6px;letter-spacing:-0.330px;font-family:'Liberation Mono', monospace;"><span style="color:#000000">ament_package</span><span style="color:#0431fa">()</span></div>
<div class="t " style="left:294.34px;top:645.29px;font-size:11.05px;color:#b5d5df;font-weight:normal;font-family:'Liberation Mono', monospace;">33</div>
<div class="r" style="left:320.9px;top:310px;width:295px;height:67px;box-sizing:border-box;border:2.2px solid #f00000;"></div>
<div class="r" style="left:862.2px;top:164.5px;width:5.5px;height:515.1px;background:linear-gradient(to right, rgba(255,255,255,0), #eeeeee 55%, rgba(255,255,255,0));"></div>
<div class="r" style="left:936.4px;top:164.8px;width:2.5px;height:266px;background:#c4c4c4;"></div>
<div class="r" style="left:937px;top:256.4px;width:2.0px;height:2.0px;background:#555555;"></div>
<div class="r" style="left:936.4px;top:430.8px;width:0.8px;height:249px;background:#f4f4f4;"></div>
<div class="r" style="left:328px;top:670.1px;width:533.8px;height:9.5px;background:#c1c1c1;"></div>
<svg class="r" style="left:8px;top:682px;width:10px;height:12px" viewBox="0 0 10 12"><path d="M1.3 4.5 L4.8 7.2 L1.3 10.3 M8 1.3 L4.8 4.7 L8 7.6" stroke="#f0f0f0" stroke-width="1.05" fill="none"/></svg>
<svg class="r" style="left:32.6px;top:682.4px;width:11px;height:11px" viewBox="0 0 11 11"><circle cx="5.2" cy="5.4" r="4.6" stroke="#fff" stroke-width="1" fill="none"/><path d="M3.3 3.5 L7.1 7.3 M7.1 3.5 L3.3 7.3" stroke="#fff" stroke-width="1"/></svg>
<div class="t " style="left:45.30px;top:683.38px;font-size:10.3px;color:#ffffff;font-weight:normal;font-family:'Liberation Sans', sans-serif;">0</div>
<svg class="r" style="left:53px;top:682.4px;width:11px;height:11px" viewBox="0 0 11 11"><path d="M5.2 0.8 L10.2 9.8 H0.3 Z" stroke="#fff" stroke-width="1" fill="none" stroke-linejoin="round"/><path d="M5.2 3.8 V6.8 M5.2 7.8 V8.8" stroke="#fff" stroke-width="1"/></svg>
<div class="t " style="left:66.50px;top:683.38px;font-size:10.3px;color:#ffffff;font-weight:normal;font-family:'Liberation Sans', sans-serif;">0</div>
<svg class="r" style="left:84.5px;top:683.0px;width:11px;height:11px" viewBox="0 0 11 11"><circle cx="5.1" cy="5.2" r="1.6" stroke="#fff" stroke-width="1" fill="none"/><circle cx="5.1" cy="5.2" r="3.9" stroke="#fff" stroke-width="1.6" stroke-dasharray="1.5 1.56" fill="none"/><circle cx="5.1" cy="5.2" r="3.4" stroke="#fff" stroke-width="0.9" fill="none"/></svg>
<div class="t " style="left:97.60px;top:683.63px;font-size:10.0px;color:#ffffff;font-weight:normal;font-family:'Liberation Sans', sans-serif;transform:scaleX(0.985);transform-origin:0 0;">Build</div>
<svg class="r" style="left:132.5px;top:682.5px;width:11px;height:11px" viewBox="0 0 11 11"><path d="M2.4 4.9 H7.6 V7.4 Q7.6 10.4 5 10.4 Q2.4 10.4 2.4 7.4 Z M3.1 4.9 Q5 0.7 6.9 4.9" stroke="#fff" stroke-width="1" fill="none"/><path d="M2.4 5.2 L0.8 4.2 M2.4 7.3 H0.5 M2.6 9.2 L1 10.2 M7.6 5.2 L9.2 4.2 M7.6 7.3 H9.5 M7.4 9.2 L9 10.2" stroke="#fff" stroke-width="0.9" fill="none"/></svg>
<svg class="r" style="left:157.3px;top:683.5px;width:9px;height:11px" viewBox="0 0 9 11"><path d="M0.8 0.8 L7.6 5 L0.8 9.2 Z" stroke="#fff" stroke-width="1" fill="none" stroke-linejoin="round"/></svg>
<div class="t " style="left:665.40px;top:683.85px;font-size:9.75px;color:#ffffff;font-weight:normal;font-family:'Liberation Sans', sans-serif;letter-spacing:-0.35px;">Ln 13, Col 22</div>
<div class="t " style="left:732.00px;top:683.85px;font-size:9.75px;color:#ffffff;font-weight:normal;font-family:'Liberation Sans', sans-serif;letter-spacing:-0.2px;transform:scaleX(0.925);transform-origin:0 0;">Spaces: 2</div>
<div class="t " style="left:783.30px;top:683.85px;font-size:9.75px;color:#ffffff;font-weight:normal;font-family:'Liberation Sans', sans-serif;letter-spacing:-0.1px;transform:scaleX(0.94);transform-origin:0 0;">UTF-8</div>
<div class="t " style="left:822.30px;top:683.85px;font-size:9.75px;color:#ffffff;font-weight:normal;font-family:'Liberation Sans', sans-serif;transform:scaleX(0.88);transform-origin:0 0;">LF</div>
<div class="t " style="left:845.00px;top:684.48px;font-size:9.0px;color:#ffffff;font-weight:normal;font-family:'Liberation Sans', sans-serif;">{</div>
<div class="t " style="left:851.60px;top:684.48px;font-size:9.0px;color:#ffffff;font-weight:normal;font-family:'Liberation Sans', sans-serif;">}</div>
<div class="t " style="left:859.40px;top:683.85px;font-size:9.75px;color:#ffffff;font-weight:normal;font-family:'Liberation Sans', sans-serif;letter-spacing:-0.2px;transform:scaleX(0.973);transform-origin:0 0;">CMake</div>
<svg class="r" style="left:900.5px;top:682.5px;width:13px;height:11px" viewBox="0 0 13 11"><path d="M3.8 0.8 Q1.2 0.8 1.2 3.2 Q1.2 4.6 2 5.2 Q0.8 6.3 0.8 7.6 Q0.8 10.2 6.3 10.2 Q11.8 10.2 11.8 7.6 Q11.8 6.3 10.6 5.2 Q11.4 4.6 11.4 3.2 Q11.4 0.8 8.8 0.8 Q7 0.8 6.3 2 Q5.6 0.8 3.8 0.8 Z" stroke="#fff" stroke-width="1.1" fill="none"/><circle cx="4" cy="3.3" r="1.3" fill="#fff"/><circle cx="8.6" cy="3.3" r="1.3" fill="#fff"/><path d="M5.2 6.8 V8.3 M7.4 6.8 V8.3" stroke="#fff" stroke-width="1"/></svg>
<svg class="r" style="left:926.2px;top:682.3px;width:10px;height:11px" viewBox="0 0 10 11"><path d="M4.8 1 Q1.5 1 1.5 4.8 V7.8 L0.6 8.8 H9 L8.1 7.8 V4.8 Q8.1 1 4.8 1 Z M3.5 9.6 Q4.8 11 6.1 9.6" stroke="#fff" stroke-width="1" fill="none"/></svg>
<svg class="r" style="left:0;top:0;width:940px;height:788px" viewBox="0 0 940 788"><rect x="873.20" y="164.50" width="17.38" height="1.3" fill="#000000" opacity="0.62"/><rect x="890.58" y="164.50" width="0.79" height="1.3" fill="#0431fa" opacity="0.62"/><rect x="891.37" y="164.50" width="5.53" height="1.3" fill="#000000" opacity="0.62"/><rect x="897.69" y="164.50" width="2.37" height="1.3" fill="#a31515" opacity="0.62"/><rect x="900.06" y="164.50" width="0.79" height="1.3" fill="#0431fa" opacity="0.62"/><rect x="873.20" y="166.09" width="5.53" height="1.3" fill="#000000" opacity="0.62"/><rect x="878.73" y="166.09" width="0.79" height="1.3" fill="#0431fa" opacity="0.62"/><rect x="879.52" y="166.09" width="12.64" height="1.3" fill="#a31515" opacity="0.62"/><rect x="892.16" y="166.09" width="0.79" height="1.3" fill="#0431fa" opacity="0.62"/><rect x="873.20" y="169.25" width="1.58" height="1.3" fill="#0000ff" opacity="0.62"/><rect x="874.78" y="169.25" width="0.79" height="1.3" fill="#0431fa" opacity="0.62"/><rect x="875.57" y="169.25" width="18.96" height="1.3" fill="#a31515" opacity="0.62"/><rect x="895.32" y="169.25" width="1.58" height="1.3" fill="#000000" opacity="0.62"/><rect x="897.69" y="169.25" width="16.59" height="1.3" fill="#000000" opacity="0.62"/><rect x="915.07" y="169.25" width="5.53" height="1.3" fill="#000000" opacity="0.62"/><rect x="921.39" y="169.25" width="5.53" height="1.3" fill="#a31515" opacity="0.62"/><rect x="926.92" y="169.25" width="0.79" height="1.3" fill="#0431fa" opacity="0.62"/><rect x="874.78" y="170.84" width="15.01" height="1.3" fill="#000000" opacity="0.62"/><rect x="889.79" y="170.84" width="0.79" height="1.3" fill="#0431fa" opacity="0.62"/><rect x="890.58" y="170.84" width="3.95" height="1.3" fill="#a31515" opacity="0.62"/><rect x="895.32" y="170.84" width="5.53" height="1.3" fill="#a31515" opacity="0.62"/><rect x="901.64" y="170.84" width="7.90" height="1.3" fill="#a31515" opacity="0.62"/><rect x="909.54" y="170.84" width="0.79" height="1.3" fill="#0431fa" opacity="0.62"/><rect x="873.20" y="172.43" width="3.95" height="1.3" fill="#0000ff" opacity="0.62"/><rect x="877.15" y="172.43" width="1.58" height="1.3" fill="#0431fa" opacity="0.62"/><rect x="873.20" y="175.59" width="0.79" height="1.3" fill="#008000" opacity="0.62"/><rect x="874.78" y="175.59" width="3.16" height="1.3" fill="#008000" opacity="0.62"/><rect x="878.73" y="175.59" width="9.48" height="1.3" fill="#008000" opacity="0.62"/><rect x="873.20" y="177.18" width="9.48" height="1.3" fill="#000000" opacity="0.62"/><rect x="882.68" y="177.18" width="0.79" height="1.3" fill="#0431fa" opacity="0.62"/><rect x="883.47" y="177.18" width="8.69" height="1.3" fill="#a31515" opacity="0.62"/><rect x="892.95" y="177.18" width="6.32" height="1.3" fill="#a31515" opacity="0.62"/><rect x="899.27" y="177.18" width="0.79" height="1.3" fill="#0431fa" opacity="0.62"/><rect x="873.20" y="178.77" width="9.48" height="1.3" fill="#000000" opacity="0.62"/><rect x="882.68" y="178.77" width="0.79" height="1.3" fill="#0431fa" opacity="0.62"/><rect x="883.47" y="178.77" width="19.75" height="1.3" fill="#a31515" opacity="0.62"/><rect x="904.01" y="178.77" width="6.32" height="1.3" fill="#a31515" opacity="0.62"/><rect x="910.33" y="178.77" width="0.79" height="1.3" fill="#0431fa" opacity="0.62"/><rect x="873.20" y="180.35" width="20.54" height="1.3" fill="#000000" opacity="0.62"/><rect x="893.74" y="180.35" width="0.79" height="1.3" fill="#0431fa" opacity="0.62"/><rect x="894.53" y="180.35" width="0.79" height="1.3" fill="#000000" opacity="0.62"/><rect x="895.32" y="180.35" width="0.79" height="1.3" fill="#319331" opacity="0.62"/><rect x="896.11" y="180.35" width="9.48" height="1.3" fill="#000000" opacity="0.62"/><rect x="905.59" y="180.35" width="0.79" height="1.3" fill="#319331" opacity="0.62"/><rect x="873.99" y="181.94" width="16.59" height="1.3" fill="#a31515" opacity="0.62"/><rect x="873.99" y="183.52" width="15.80" height="1.3" fill="#a31515" opacity="0.62"/><rect x="873.20" y="185.10" width="0.79" height="1.3" fill="#0431fa" opacity="0.62"/><rect x="873.20" y="188.28" width="0.79" height="1.3" fill="#008000" opacity="0.62"/><rect x="874.78" y="188.28" width="7.11" height="1.3" fill="#008000" opacity="0.62"/><rect x="882.68" y="188.28" width="2.37" height="1.3" fill="#008000" opacity="0.62"/><rect x="885.84" y="188.28" width="7.11" height="1.3" fill="#008000" opacity="0.62"/><rect x="893.74" y="188.28" width="5.53" height="1.3" fill="#008000" opacity="0.62"/><rect x="900.06" y="188.28" width="1.58" height="1.3" fill="#008000" opacity="0.62"/><rect x="902.43" y="188.28" width="3.95" height="1.3" fill="#008000" opacity="0.62"/><rect x="907.17" y="188.28" width="1.58" height="1.3" fill="#008000" opacity="0.62"/><rect x="909.54" y="188.28" width="3.16" height="1.3" fill="#008000" opacity="0.62"/><rect x="913.49" y="188.28" width="1.58" height="1.3" fill="#008000" opacity="0.62"/><rect x="873.20" y="189.86" width="0.79" height="1.3" fill="#008000" opacity="0.62"/><rect x="874.78" y="189.86" width="5.53" height="1.3" fill="#008000" opacity="0.62"/><rect x="881.10" y="189.86" width="9.48" height="1.3" fill="#008000" opacity="0.62"/><rect x="891.37" y="189.86" width="7.11" height="1.3" fill="#008000" opacity="0.62"/><rect x="873.20" y="191.44" width="0.79" height="1.3" fill="#008000" opacity="0.62"/><rect x="874.78" y="191.44" width="19.75" height="1.3" fill="#008000" opacity="0.62"/><rect x="895.32" y="191.44" width="7.11" height="1.3" fill="#008000" opacity="0.62"/><rect x="873.20" y="194.62" width="1.58" height="1.3" fill="#0000ff" opacity="0.62"/><rect x="874.78" y="194.62" width="0.79" height="1.3" fill="#0431fa" opacity="0.62"/><rect x="875.57" y="194.62" width="10.27" height="1.3" fill="#a31515" opacity="0.62"/><rect x="885.84" y="194.62" width="0.79" height="1.3" fill="#0431fa" opacity="0.62"/><rect x="874.78" y="196.20" width="9.48" height="1.3" fill="#000000" opacity="0.62"/><rect x="884.26" y="196.20" width="0.79" height="1.3" fill="#0431fa" opacity="0.62"/><rect x="885.05" y="196.20" width="11.85" height="1.3" fill="#a31515" opacity="0.62"/><rect x="897.69" y="196.20" width="6.32" height="1.3" fill="#a31515" opacity="0.62"/><rect x="904.01" y="196.20" width="0.79" height="1.3" fill="#0431fa" opacity="0.62"/><rect x="874.78" y="197.78" width="0.79" height="1.3" fill="#008000" opacity="0.62"/><rect x="876.36" y="197.78" width="2.37" height="1.3" fill="#008000" opacity="0.62"/><rect x="879.52" y="197.78" width="7.11" height="1.3" fill="#008000" opacity="0.62"/><rect x="887.42" y="197.78" width="3.16" height="1.3" fill="#008000" opacity="0.62"/><rect x="891.37" y="197.78" width="3.95" height="1.3" fill="#008000" opacity="0.62"/><rect x="896.11" y="197.78" width="2.37" height="1.3" fill="#008000" opacity="0.62"/><rect x="899.27" y="197.78" width="4.74" height="1.3" fill="#008000" opacity="0.62"/><rect x="904.80" y="197.78" width="3.95" height="1.3" fill="#008000" opacity="0.62"/><rect x="909.54" y="197.78" width="4.74" height="1.3" fill="#008000" opacity="0.62"/><rect x="915.07" y="197.78" width="2.37" height="1.3" fill="#008000" opacity="0.62"/><rect x="918.23" y="197.78" width="7.90" height="1.3" fill="#008000" opacity="0.62"/><rect x="874.78" y="199.37" width="0.79" height="1.3" fill="#008000" opacity="0.62"/><rect x="876.36" y="199.37" width="5.53" height="1.3" fill="#008000" opacity="0.62"/><rect x="882.68" y="199.37" width="2.37" height="1.3" fill="#008000" opacity="0.62"/><rect x="885.84" y="199.37" width="3.16" height="1.3" fill="#008000" opacity="0.62"/><rect x="889.79" y="199.37" width="3.16" height="1.3" fill="#008000" opacity="0.62"/><rect x="893.74" y="199.37" width="0.79" height="1.3" fill="#008000" opacity="0.62"/><rect x="895.32" y="199.37" width="7.11" height="1.3" fill="#008000" opacity="0.62"/><rect x="903.22" y="199.37" width="2.37" height="1.3" fill="#008000" opacity="0.62"/><rect x="906.38" y="199.37" width="5.53" height="1.3" fill="#008000" opacity="0.62"/><rect x="912.70" y="199.37" width="1.58" height="1.3" fill="#008000" opacity="0.62"/><rect x="915.07" y="199.37" width="3.95" height="1.3" fill="#008000" opacity="0.62"/><rect x="919.81" y="199.37" width="1.58" height="1.3" fill="#008000" opacity="0.62"/><rect x="922.18" y="199.37" width="2.37" height="1.3" fill="#008000" opacity="0.62"/><rect x="925.34" y="199.37" width="4.74" height="1.3" fill="#008000" opacity="0.62"/><rect x="930.87" y="199.37" width="3.95" height="1.3" fill="#008000" opacity="0.62"/><rect x="874.78" y="200.96" width="2.37" height="1.3" fill="#000000" opacity="0.62"/><rect x="877.15" y="200.96" width="0.79" height="1.3" fill="#0431fa" opacity="0.62"/><rect x="877.94" y="200.96" width="21.33" height="1.3" fill="#a31515" opacity="0.62"/><rect x="900.06" y="200.96" width="3.16" height="1.3" fill="#0000ff" opacity="0.62"/><rect x="903.22" y="200.96" width="0.79" height="1.3" fill="#0431fa" opacity="0.62"/><rect x="874.78" y="202.54" width="0.79" height="1.3" fill="#008000" opacity="0.62"/><rect x="876.36" y="202.54" width="2.37" height="1.3" fill="#008000" opacity="0.62"/><rect x="879.52" y="202.54" width="7.11" height="1.3" fill="#008000" opacity="0.62"/><rect x="887.42" y="202.54" width="3.16" height="1.3" fill="#008000" opacity="0.62"/><rect x="891.37" y="202.54" width="3.95" height="1.3" fill="#008000" opacity="0.62"/><rect x="896.11" y="202.54" width="5.53" height="1.3" fill="#008000" opacity="0.62"/><rect x="902.43" y="202.54" width="3.95" height="1.3" fill="#008000" opacity="0.62"/><rect x="907.17" y="202.54" width="3.95" height="1.3" fill="#008000" opacity="0.62"/><rect x="911.91" y="202.54" width="1.58" height="1.3" fill="#008000" opacity="0.62"/><rect x="914.28" y="202.54" width="0.79" height="1.3" fill="#008000" opacity="0.62"/><rect x="915.86" y="202.54" width="2.37" height="1.3" fill="#008000" opacity="0.62"/><rect x="919.02" y="202.54" width="3.95" height="1.3" fill="#008000" opacity="0.62"/><rect x="874.78" y="204.12" width="0.79" height="1.3" fill="#008000" opacity="0.62"/><rect x="876.36" y="204.12" width="5.53" height="1.3" fill="#008000" opacity="0.62"/><rect x="882.68" y="204.12" width="2.37" height="1.3" fill="#008000" opacity="0.62"/><rect x="885.84" y="204.12" width="3.16" height="1.3" fill="#008000" opacity="0.62"/><rect x="889.79" y="204.12" width="3.16" height="1.3" fill="#008000" opacity="0.62"/><rect x="893.74" y="204.12" width="3.16" height="1.3" fill="#008000" opacity="0.62"/><rect x="897.69" y="204.12" width="5.53" height="1.3" fill="#008000" opacity="0.62"/><rect x="904.01" y="204.12" width="1.58" height="1.3" fill="#008000" opacity="0.62"/><rect x="906.38" y="204.12" width="1.58" height="1.3" fill="#008000" opacity="0.62"/><rect x="908.75" y="204.12" width="0.79" height="1.3" fill="#008000" opacity="0.62"/><rect x="910.33" y="204.12" width="2.37" height="1.3" fill="#008000" opacity="0.62"/><rect x="913.49" y="204.12" width="3.16" height="1.3" fill="#008000" opacity="0.62"/><rect x="917.44" y="204.12" width="2.37" height="1.3" fill="#008000" opacity="0.62"/><rect x="920.60" y="204.12" width="3.16" height="1.3" fill="#008000" opacity="0.62"/><rect x="874.78" y="205.71" width="0.79" height="1.3" fill="#008000" opacity="0.62"/><rect x="876.36" y="205.71" width="0.79" height="1.3" fill="#008000" opacity="0.62"/><rect x="877.94" y="205.71" width="7.11" height="1.3" fill="#008000" opacity="0.62"/><rect x="885.84" y="205.71" width="2.37" height="1.3" fill="#008000" opacity="0.62"/><rect x="889.00" y="205.71" width="5.53" height="1.3" fill="#008000" opacity="0.62"/><rect x="895.32" y="205.71" width="1.58" height="1.3" fill="#008000" opacity="0.62"/><rect x="897.69" y="205.71" width="3.95" height="1.3" fill="#008000" opacity="0.62"/><rect x="902.43" y="205.71" width="1.58" height="1.3" fill="#008000" opacity="0.62"/><rect x="904.80" y="205.71" width="2.37" height="1.3" fill="#008000" opacity="0.62"/><rect x="907.96" y="205.71" width="4.74" height="1.3" fill="#008000" opacity="0.62"/><rect x="913.49" y="205.71" width="3.95" height="1.3" fill="#008000" opacity="0.62"/><rect x="874.78" y="207.29" width="2.37" height="1.3" fill="#000000" opacity="0.62"/><rect x="877.15" y="207.29" width="0.79" height="1.3" fill="#0431fa" opacity="0.62"/><rect x="877.94" y="207.29" width="19.75" height="1.3" fill="#a31515" opacity="0.62"/><rect x="898.48" y="207.29" width="3.16" height="1.3" fill="#0000ff" opacity="0.62"/><rect x="901.64" y="207.29" width="0.79" height="1.3" fill="#0431fa" opacity="0.62"/><rect x="874.78" y="208.88" width="30.02" height="1.3" fill="#000000" opacity="0.62"/><rect x="904.80" y="208.88" width="1.58" height="1.3" fill="#0431fa" opacity="0.62"/><rect x="873.20" y="210.47" width="3.95" height="1.3" fill="#0000ff" opacity="0.62"/><rect x="877.15" y="210.47" width="1.58" height="1.3" fill="#0431fa" opacity="0.62"/><rect x="873.20" y="213.63" width="10.27" height="1.3" fill="#000000" opacity="0.62"/><rect x="883.47" y="213.63" width="1.58" height="1.3" fill="#0431fa" opacity="0.62"/></svg>
</body></html>
